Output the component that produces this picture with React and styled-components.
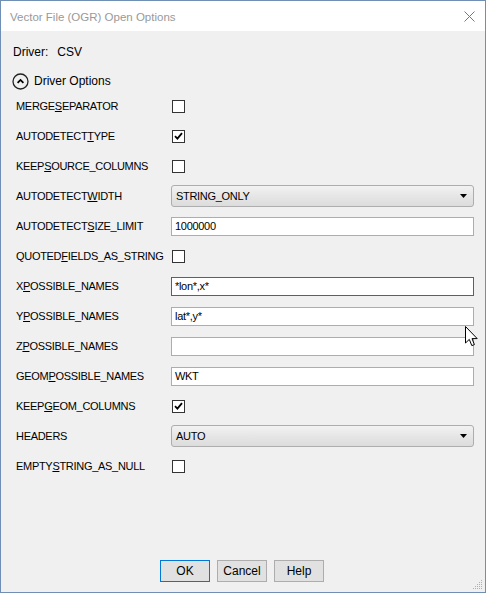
import React from "react";
import styled, { createGlobalStyle } from "styled-components";

const Global = createGlobalStyle`
  html, body {
    margin: 0;
    padding: 0;
    background: #f0f0f0;
  }
  * {
    box-sizing: border-box;
  }
`;

const Window = styled.div`
  position: relative;
  width: 486px;
  height: 593px;
  border: 1px solid #6f8fb5;
  background: #f0f0f0;
  display: flex;
  flex-direction: column;
  font-family: "Liberation Sans", Arial, sans-serif;
  font-size: 12px;
  color: #000;
  overflow: hidden;
`;

const TitleBar = styled.div`
  height: 30px;
  background: #fff;
  display: flex;
  align-items: center;
  justify-content: space-between;
  padding: 1px 10px 0 9px;
  flex-shrink: 0;
`;

const Title = styled.span`
  color: #999;
  font-size: 11.5px;
`;

const Body = styled.div`
  flex: 1;
  display: flex;
  flex-direction: column;
  padding: 13px 11px 0 12px;
`;

const DriverLine = styled.div`
  display: flex;
  gap: 9px;
  height: 16px;
  align-items: center;
`;

const GroupHeader = styled.div`
  margin-top: 12px;
  display: flex;
  align-items: center;
  gap: 5px;
  height: 18px;
  margin-left: -1px;
`;

const Options = styled.div`
  margin-top: 1px;
  padding-left: 3px;
  display: grid;
  grid-template-columns: 155px 1fr;
  grid-auto-rows: 30px;
  align-items: center;
  font-size: 11px;
  letter-spacing: -0.3px;
`;

const Label = styled.span`
  white-space: nowrap;
  u {
    text-decoration: underline;
    text-underline-offset: 1px;
  }
`;

const Check = styled.div`
  width: 13px;
  height: 13px;
  border: 1px solid #333;
  background: #fff;
  display: flex;
  align-items: center;
  justify-content: center;
  margin-left: 1px;
`;

const Combo = styled.div`
  height: 22px;
  border: 1px solid #adadad;
  border-radius: 3px;
  background: linear-gradient(#f2f2f2, #e6e6e6 50%, #dcdcdc);
  display: flex;
  align-items: center;
  justify-content: space-between;
  padding: 0 6px 0 4px;
`;

const Edit = styled.div`
  height: 19px;
  border: 1px solid ${(p) => (p.$focused ? "#0078d7" : "#adadad")};
  background: #fff;
  display: flex;
  align-items: center;
  padding: 0 3px;
`;

const ButtonRow = styled.div`
  margin-top: auto;
  display: flex;
  justify-content: center;
  gap: 7px;
  padding: 0 3px 10px 0;
`;

const Button = styled.button`
  width: 50px;
  height: 22px;
  font-family: inherit;
  font-size: 12px;
  color: #000;
  background: #e1e1e1;
  border: 1px solid ${(p) => (p.$default ? "#0078d7" : "#adadad")};
  padding: 0;
`;

const Grip = styled.svg`
  position: absolute;
  right: 2px;
  bottom: 2px;
`;

const Cursor = styled.svg`
  position: absolute;
  left: 464px;
  top: 325px;
`;

const CheckMark = () => (
  <svg width="9" height="8" viewBox="0 0 9 8">
    <path d="M1 4.2 L3.4 6.6 L8 1.2" fill="none" stroke="#000" strokeWidth="1.8" />
  </svg>
);

const Arrow = () => (
  <svg width="7" height="4" viewBox="0 0 7 4">
    <path d="M0 0 H7 L3.5 4 Z" fill="#000" />
  </svg>
);

const options = [
  { pre: "MERGE", u: "S", post: "EPARATOR", type: "check" },
  { pre: "AUTODETECT", u: "T", post: "YPE", type: "check", checked: true },
  { pre: "KEEP", u: "S", post: "OURCE_COLUMNS", type: "check" },
  { pre: "AUTODETECT", u: "W", post: "IDTH", type: "combo", value: "STRING_ONLY" },
  { pre: "AUTODETECT", u: "S", post: "IZE_LIMIT", type: "edit", value: "1000000" },
  { pre: "QUOTED", u: "F", post: "IELDS_AS_STRING", type: "check" },
  { pre: "X", u: "P", post: "OSSIBLE_NAMES", type: "edit", value: "*lon*,x*", focused: true },
  { pre: "Y", u: "P", post: "OSSIBLE_NAMES", type: "edit", value: "lat*,y*" },
  { pre: "Z", u: "P", post: "OSSIBLE_NAMES", type: "edit", value: "" },
  { pre: "GEOM", u: "P", post: "OSSIBLE_NAMES", type: "edit", value: "WKT" },
  { pre: "KEEP", u: "G", post: "EOM_COLUMNS", type: "check", checked: true },
  { pre: "HEADERS", u: "", post: "", type: "combo", value: "AUTO" },
  { pre: "EMPTY", u: "S", post: "TRING_AS_NULL", type: "check" },
];

const Control = ({ o }) => {
  if (o.type === "check") return <Check>{o.checked && <CheckMark />}</Check>;
  if (o.type === "combo")
    return (
      <Combo>
        <span>{o.value}</span>
        <Arrow />
      </Combo>
    );
  return <Edit $focused={o.focused}>{o.value}</Edit>;
};

export default function App() {
  return (
    <>
      <Global />
      <Window>
        <TitleBar>
          <Title>Vector File (OGR) Open Options</Title>
          <svg width="11" height="11" viewBox="0 0 11 11">
            <path d="M0.5 0.5 L10.5 10.5 M10.5 0.5 L0.5 10.5" stroke="#777" strokeWidth="1" />
          </svg>
        </TitleBar>
        <Body>
          <DriverLine>
            <span>Driver:</span>
            <span>CSV</span>
          </DriverLine>
          <GroupHeader>
            <svg width="17" height="17" viewBox="0 0 17 17">
              <circle cx="8.5" cy="8.5" r="7.5" fill="none" stroke="#222" strokeWidth="1.3" />
              <path d="M5.6 9.8 L8.5 6.9 L11.4 9.8" fill="none" stroke="#000" strokeWidth="1.8" />
            </svg>
            <span>Driver Options</span>
          </GroupHeader>
          <Options>
            {options.map((o, i) => (
              <React.Fragment key={i}>
                <Label>
                  {o.pre}
                  {o.u && <u>{o.u}</u>}
                  {o.post}
                </Label>
                <div>
                  <Control o={o} />
                </div>
              </React.Fragment>
            ))}
          </Options>
          <ButtonRow>
            <Button $default>OK</Button>
            <Button>Cancel</Button>
            <Button>Help</Button>
          </ButtonRow>
        </Body>
        <Grip width="10" height="10" viewBox="0 0 10 10">
          {[
            [8, 0], [8, 2], [8, 4], [8, 6], [8, 8],
            [6, 2], [6, 4], [6, 6], [6, 8],
            [4, 4], [4, 6], [4, 8],
            [2, 6], [2, 8],
            [0, 8],
          ].map(([x, y], i) => (
            <rect key={i} x={x} y={y} width="1" height="1" fill="#b0b0b0" />
          ))}
        </Grip>
        <Cursor width="14" height="22" viewBox="0 0 14 22">
          <path
            d="M0.5 0.5 L0.5 17 L4.3 13.4 L6.8 19.6 L9.4 18.6 L7 12.6 L12.2 12.6 Z"
            fill="#fff"
            stroke="#000"
            strokeWidth="1"
            strokeLinejoin="round"
          />
        </Cursor>
      </Window>
    </>
  );
}
